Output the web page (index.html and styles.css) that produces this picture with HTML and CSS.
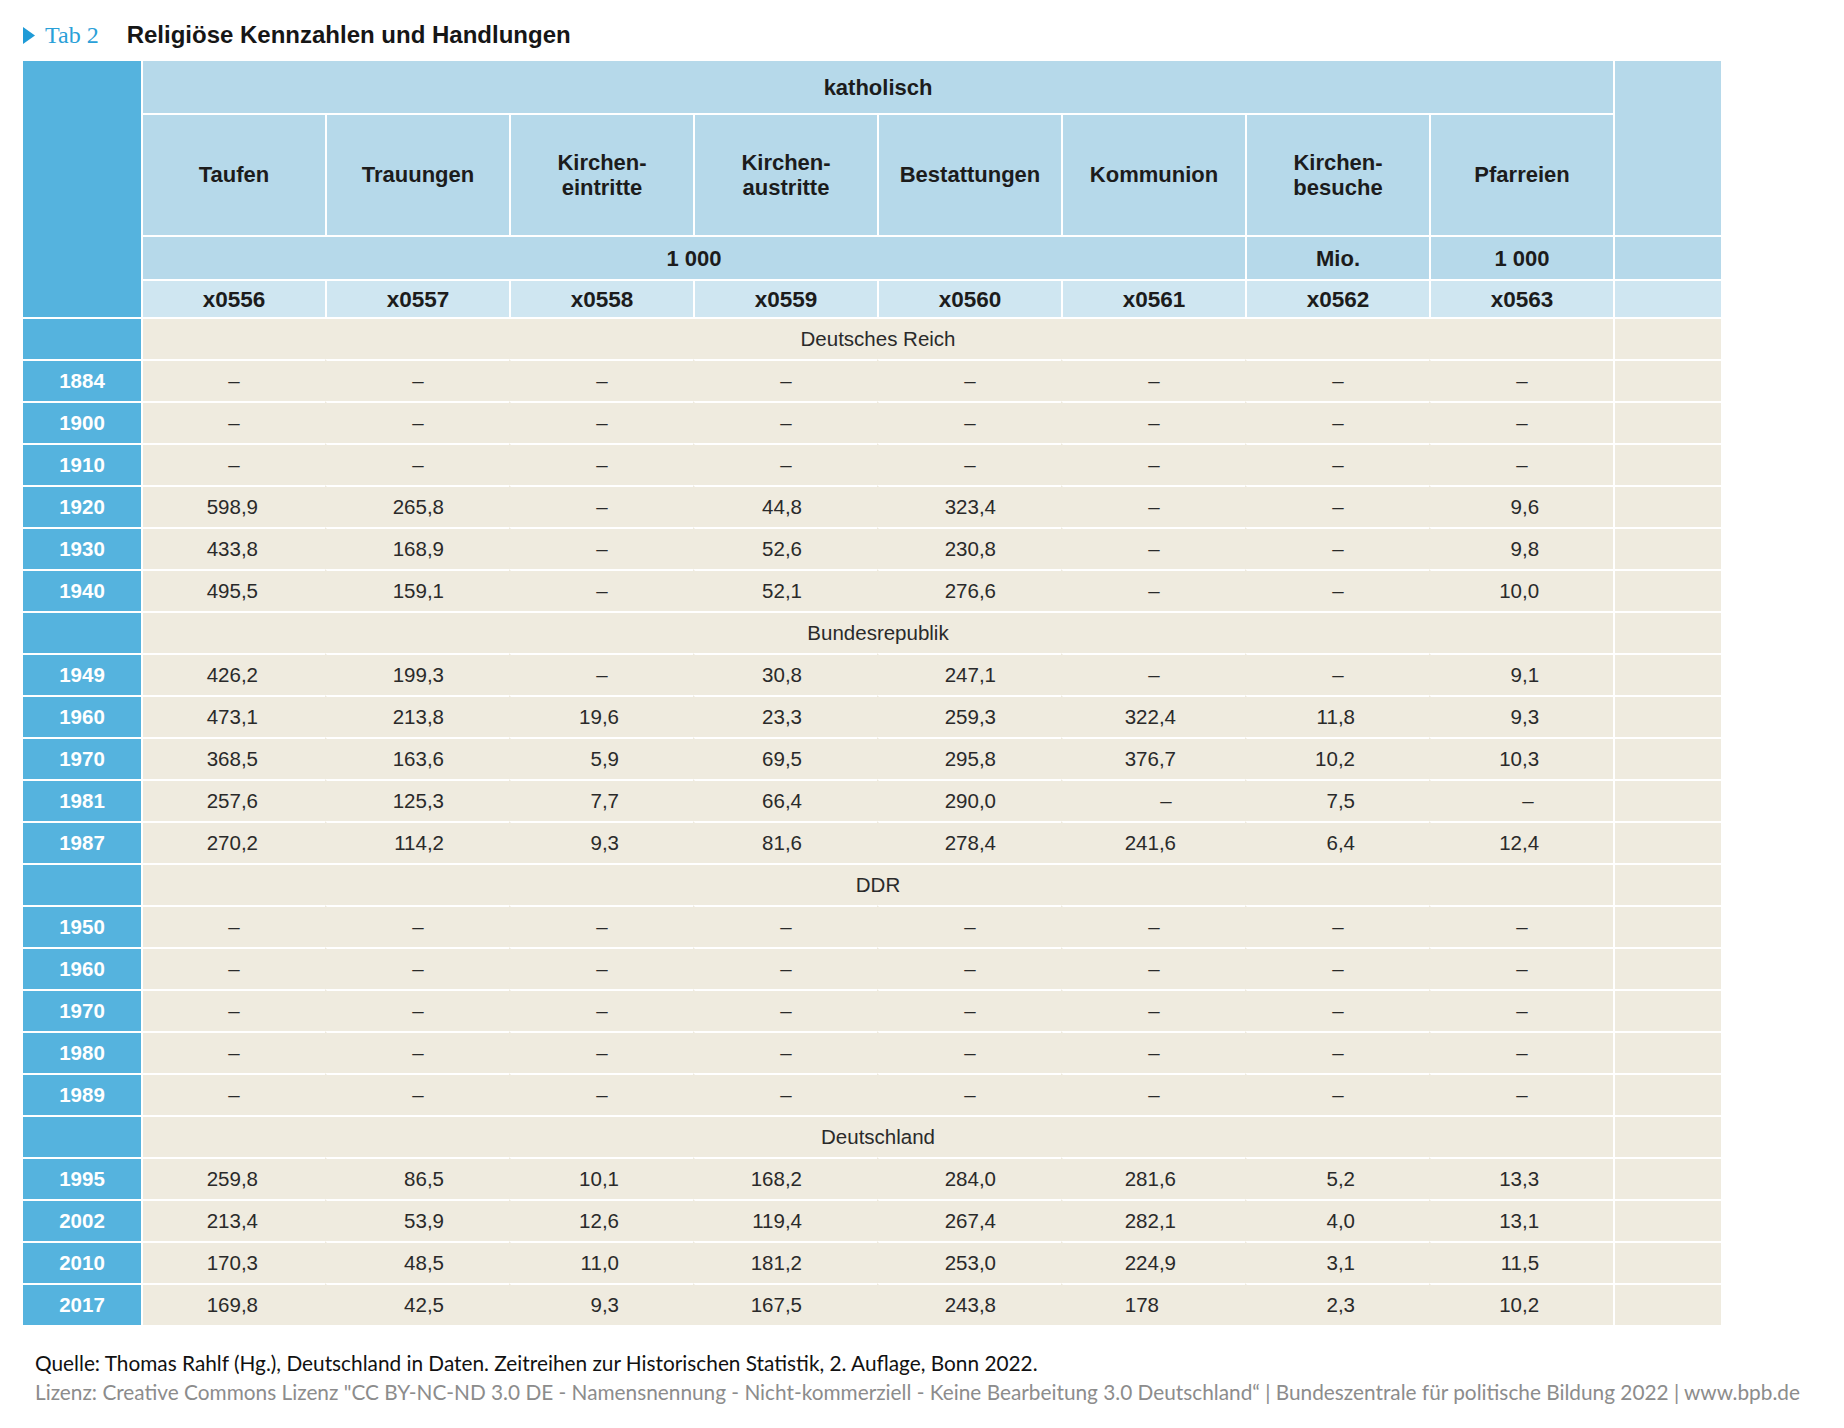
FILE: index.html
```html
<!DOCTYPE html>
<html lang="de">
<head>
<meta charset="utf-8">
<title>Tab 2 – Religiöse Kennzahlen und Handlungen</title>
<link rel="stylesheet" href="styles.css">
</head>
<body>
<div class="page">
  <h1 class="title">
    <svg class="tri" width="12" height="17" viewBox="0 0 12 17" aria-hidden="true"><polygon points="0,0 12,8.5 0,17" fill="#1f9bd7"/></svg>
    <span class="tab">Tab 2</span>
    <span class="name">Religiöse Kennzahlen und Handlungen</span>
  </h1>

  <table class="stats">
    <colgroup>
      <col class="c-year">
      <col class="c-val"><col class="c-val"><col class="c-val"><col class="c-val">
      <col class="c-val"><col class="c-val"><col class="c-val"><col class="c-val">
      <col class="c-end">
    </colgroup>
    <thead>
      <tr class="h-group">
        <th class="corner" rowspan="4"></th>
        <th colspan="8">katholisch</th>
        <th class="end" rowspan="2"></th>
      </tr>
      <tr class="h-names">
        <th>Taufen</th>
        <th>Trauungen</th>
        <th>Kirchen-<br>eintritte</th>
        <th>Kirchen-<br>austritte</th>
        <th>Bestattungen</th>
        <th>Kommunion</th>
        <th>Kirchen-<br>besuche</th>
        <th>Pfarreien</th>
      </tr>
      <tr class="h-units">
        <th colspan="6">1&nbsp;000</th>
        <th>Mio.</th>
        <th>1&nbsp;000</th>
        <th class="end"></th>
      </tr>
      <tr class="h-codes">
        <th>x0556</th><th>x0557</th><th>x0558</th><th>x0559</th>
        <th>x0560</th><th>x0561</th><th>x0562</th><th>x0563</th>
        <th class="end"></th>
      </tr>
    </thead>
    <tbody>
      <tr class="section"><th class="year"></th><td colspan="8">Deutsches Reich</td><td class="end"></td></tr>
      <tr class="data"><th class="year">1884</th><td class="na">–</td><td class="na">–</td><td class="na">–</td><td class="na">–</td><td class="na">–</td><td class="na">–</td><td class="na">–</td><td class="na">–</td><td class="end"></td></tr>
      <tr class="data"><th class="year">1900</th><td class="na">–</td><td class="na">–</td><td class="na">–</td><td class="na">–</td><td class="na">–</td><td class="na">–</td><td class="na">–</td><td class="na">–</td><td class="end"></td></tr>
      <tr class="data"><th class="year">1910</th><td class="na">–</td><td class="na">–</td><td class="na">–</td><td class="na">–</td><td class="na">–</td><td class="na">–</td><td class="na">–</td><td class="na">–</td><td class="end"></td></tr>
      <tr class="data"><th class="year">1920</th><td>598,9</td><td>265,8</td><td class="na">–</td><td>44,8</td><td>323,4</td><td class="na">–</td><td class="na">–</td><td>9,6</td><td class="end"></td></tr>
      <tr class="data"><th class="year">1930</th><td>433,8</td><td>168,9</td><td class="na">–</td><td>52,6</td><td>230,8</td><td class="na">–</td><td class="na">–</td><td>9,8</td><td class="end"></td></tr>
      <tr class="data"><th class="year">1940</th><td>495,5</td><td>159,1</td><td class="na">–</td><td>52,1</td><td>276,6</td><td class="na">–</td><td class="na">–</td><td>10,0</td><td class="end"></td></tr>

      <tr class="section"><th class="year"></th><td colspan="8">Bundesrepublik</td><td class="end"></td></tr>
      <tr class="data"><th class="year">1949</th><td>426,2</td><td>199,3</td><td class="na">–</td><td>30,8</td><td>247,1</td><td class="na">–</td><td class="na">–</td><td>9,1</td><td class="end"></td></tr>
      <tr class="data"><th class="year">1960</th><td>473,1</td><td>213,8</td><td>19,6</td><td>23,3</td><td>259,3</td><td>322,4</td><td>11,8</td><td>9,3</td><td class="end"></td></tr>
      <tr class="data"><th class="year">1970</th><td>368,5</td><td>163,6</td><td>5,9</td><td>69,5</td><td>295,8</td><td>376,7</td><td>10,2</td><td>10,3</td><td class="end"></td></tr>
      <tr class="data"><th class="year">1981</th><td>257,6</td><td>125,3</td><td>7,7</td><td>66,4</td><td>290,0</td><td class="na shift-l">–</td><td>7,5</td><td class="na shift-s">–</td><td class="end"></td></tr>
      <tr class="data"><th class="year">1987</th><td>270,2</td><td>114,2</td><td>9,3</td><td>81,6</td><td>278,4</td><td>241,6</td><td>6,4</td><td>12,4</td><td class="end"></td></tr>

      <tr class="section"><th class="year"></th><td colspan="8">DDR</td><td class="end"></td></tr>
      <tr class="data"><th class="year">1950</th><td class="na">–</td><td class="na">–</td><td class="na">–</td><td class="na">–</td><td class="na">–</td><td class="na">–</td><td class="na">–</td><td class="na">–</td><td class="end"></td></tr>
      <tr class="data"><th class="year">1960</th><td class="na">–</td><td class="na">–</td><td class="na">–</td><td class="na">–</td><td class="na">–</td><td class="na">–</td><td class="na">–</td><td class="na">–</td><td class="end"></td></tr>
      <tr class="data"><th class="year">1970</th><td class="na">–</td><td class="na">–</td><td class="na">–</td><td class="na">–</td><td class="na">–</td><td class="na">–</td><td class="na">–</td><td class="na">–</td><td class="end"></td></tr>
      <tr class="data"><th class="year">1980</th><td class="na">–</td><td class="na">–</td><td class="na">–</td><td class="na">–</td><td class="na">–</td><td class="na">–</td><td class="na">–</td><td class="na">–</td><td class="end"></td></tr>
      <tr class="data"><th class="year">1989</th><td class="na">–</td><td class="na">–</td><td class="na">–</td><td class="na">–</td><td class="na">–</td><td class="na">–</td><td class="na">–</td><td class="na">–</td><td class="end"></td></tr>

      <tr class="section"><th class="year"></th><td colspan="8">Deutschland</td><td class="end"></td></tr>
      <tr class="data"><th class="year">1995</th><td>259,8</td><td>86,5</td><td>10,1</td><td>168,2</td><td>284,0</td><td>281,6</td><td>5,2</td><td>13,3</td><td class="end"></td></tr>
      <tr class="data"><th class="year">2002</th><td>213,4</td><td>53,9</td><td>12,6</td><td>119,4</td><td>267,4</td><td>282,1</td><td>4,0</td><td>13,1</td><td class="end"></td></tr>
      <tr class="data"><th class="year">2010</th><td>170,3</td><td>48,5</td><td>11,0</td><td>181,2</td><td>253,0</td><td>224,9</td><td>3,1</td><td>11,5</td><td class="end"></td></tr>
      <tr class="data"><th class="year">2017</th><td>169,8</td><td>42,5</td><td>9,3</td><td>167,5</td><td>243,8</td><td class="int">178</td><td>2,3</td><td>10,2</td><td class="end"></td></tr>
    </tbody>
  </table>

  <footer class="notes">
    <p class="source">Quelle: Thomas Rahlf (Hg.), Deutschland in Daten. Zeitreihen zur Historischen Statistik, 2. Auflage, Bonn 2022.</p>
    <p class="license">Lizenz: Creative Commons Lizenz "CC BY-NC-ND 3.0 DE - Namensnennung - Nicht-kommerziell - Keine Bearbeitung 3.0 Deutschland“ | Bundeszentrale für politische Bildung 2022 | www.bpb.de</p>
  </footer>
</div>
</body>
</html>
```

FILE: styles.css
```css
html, body {
  margin: 0;
  padding: 0;
  background: #ffffff;
}

.page {
  padding: 20px 0 0 21px;
  font-family: "Liberation Sans", Arial, sans-serif;
  color: #1f1f1f;
}

/* ---------- title ---------- */
.title {
  display: flex;
  align-items: baseline;
  margin: 0 0 9px 2px;
  height: 30px;
  line-height: 30px;
  font-weight: normal;
}

.tri {
  align-self: center;
  margin-top: 1px;
  width: 12px;
  height: 17px;
  flex: none;
}

.tab {
  margin-left: 10px;
  font-family: "Liberation Serif", "Times New Roman", serif;
  font-size: 24px;
  color: #2aa0d8;
}

.name {
  margin-left: 28px;
  font-size: 24px;
  font-weight: bold;
  color: #161616;
}

/* ---------- table ---------- */
.stats {
  table-layout: fixed;
  width: 1700px;
  border-collapse: separate;
  border-spacing: 0;
  background: #ffffff;
}

.c-year { width: 120px; }
.c-val  { width: 184px; }
.c-end  { width: 108px; }

.stats th,
.stats td {
  padding: 0;
  vertical-align: middle;
  text-align: center;
  border-top: 2px solid #ffffff;
  border-left: 2px solid #ffffff;
}

/* header */
.stats thead th {
  background: #b6d9ea;
  font-size: 22px;
  font-weight: bold;
  color: #1c1c1c;
  padding-top: 1px;
}

.stats thead th.corner {
  background: #55b3de;
}

.h-group { height: 54px; }
.h-names { height: 122px; }
.h-units { height: 44px; }
.h-codes { height: 38px; }

.h-names th { line-height: 24.5px; }

.stats thead .h-codes th {
  background: #cfe6f1;
  font-size: 22.5px;
}

/* body */
.stats tbody tr { height: 42px; }

.stats tbody th.year {
  background: #55b3de;
  color: #ffffff;
  font-size: 20.5px;
  font-weight: bold;
}

.stats tbody td {
  background: #efebdf;
  font-size: 20.5px;
  color: #2a2a2a;
}

.data td { text-align: right; }

/* data columns run together without vertical rules */
.stats tbody .data td { border-left-color: #efebdf; }
.stats tbody .data td:nth-child(2),
.stats tbody td.end { border-left-color: #ffffff; }

.data td:nth-child(2) { padding-right: 67px; }
.data td:nth-child(3) { padding-right: 65px; }
.data td:nth-child(4) { padding-right: 74px; }
.data td:nth-child(5) { padding-right: 75px; }
.data td:nth-child(6) { padding-right: 65px; }
.data td:nth-child(7) { padding-right: 69px; }
.data td:nth-child(8) { padding-right: 74px; }
.data td:nth-child(9) { padding-right: 74px; }

.data td.na {
  padding-right: 0;
  text-align: center;
}

.data td.na.shift-l { padding-left: 24px; }
.data td.na.shift-s { padding-left: 12px; }

.data td.int { padding-right: 86px; }

.stats td.end { padding: 0; }

/* ---------- notes ---------- */
.notes {
  margin: 23px 0 0 14px;
  font-family: Lato, "Liberation Sans", sans-serif;
  font-size: 20.8px;
  line-height: 29px;
}

.notes p { margin: 0; }

.source { color: #111111; }
.license { color: #8c8c8c; }
```
